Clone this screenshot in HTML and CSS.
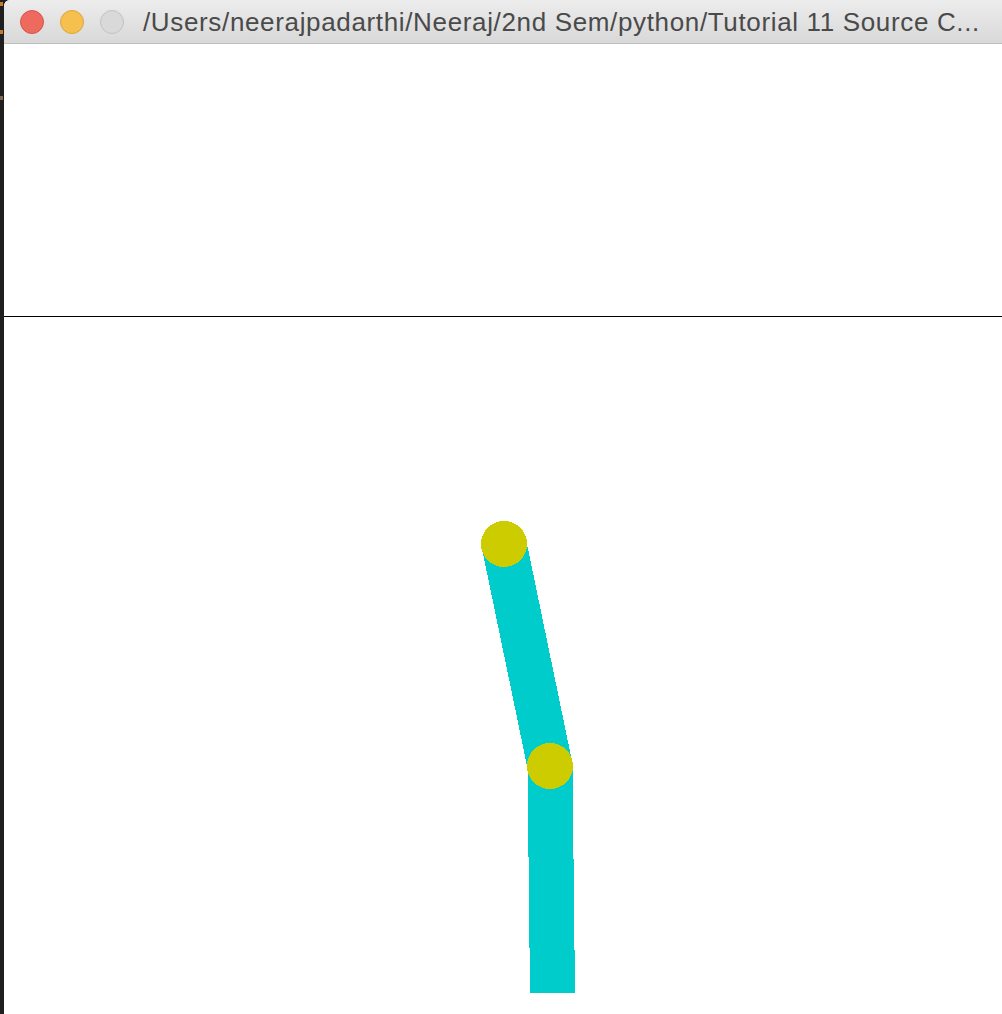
FILE: index.html
```html
<!DOCTYPE html>
<html>
<head>
<meta charset="utf-8">
<link rel="stylesheet" href="styles.css">
</head>
<body>
<div class="desktop">
  <div class="side-strip">
    <span class="dot dot-a"></span>
    <span class="dot dot-b"></span>
    <span class="dot dot-c"></span>
  </div>
  <div class="window">
    <div class="titlebar">
      <div class="lights">
        <span class="light light-close"></span>
        <span class="light light-min"></span>
        <span class="light light-max"></span>
      </div>
      <div class="title">/Users/neerajpadarthi/Neeraj/2nd Sem/python/Tutorial 11 Source C...</div>
    </div>
    <div class="canvas">
      <svg class="scene" width="998" height="970" viewBox="0 0 998 970" xmlns="http://www.w3.org/2000/svg" shape-rendering="crispEdges">
        <rect x="0" y="272" width="998" height="1" fill="#000"/>
        <line x1="500" y1="500" x2="546" y2="722" stroke="#00cccc" stroke-width="45"/>
        <line x1="546" y1="722" x2="548.5" y2="949" stroke="#00cccc" stroke-width="45"/>
        <circle cx="500" cy="500" r="23" fill="#cccc00"/>
        <circle cx="546" cy="722" r="23" fill="#cccc00"/>
      </svg>
    </div>
  </div>
</div>
</body>
</html>
```
FILE: styles.css
```css
html, body {
  margin: 0;
  padding: 0;
  background: #1f1f1f;
}
.desktop {
  display: flex;
  width: 1002px;
  height: 1014px;
  overflow: hidden;
}
.side-strip {
  width: 4px;
  flex: none;
  background: #1f1f1f;
  display: flex;
  flex-direction: column;
  align-items: flex-start;
}
.dot {
  display: block;
  width: 3px;
  height: 4px;
  background: #c47a2c;
}
.dot-a { margin-top: 2px; }
.dot-b { margin-top: 24px; }
.dot-c { margin-top: 62px; background: #7a6a50; }
.window {
  flex: 1;
  display: flex;
  flex-direction: column;
  background: #ffffff;
  border-top-left-radius: 6px;
  overflow: hidden;
}
.titlebar {
  height: 43px;
  flex: none;
  display: flex;
  align-items: center;
  background: linear-gradient(#ededed, #d8d8d8);
  border-bottom: 1px solid #bdbdbd;
}
.lights {
  display: flex;
  gap: 16px;
  margin-left: 16px;
  margin-right: 19px;
}
.light {
  width: 24px;
  height: 24px;
  border-radius: 50%;
  box-sizing: border-box;
}
.light-close { background: #ee6a5e; border: 1px solid #d8564b; }
.light-min { background: #f6c04f; border: 1px solid #dca63a; }
.light-max { background: #d9d9d9; border: 1px solid #c2c2c2; }
.title {
  font-family: "Liberation Sans", Arial, sans-serif;
  font-size: 26px;
  letter-spacing: 0.65px;
  color: #4a4a4a;
  white-space: nowrap;
  padding-top: 1px;
}
.canvas {
  flex: 1;
  position: relative;
}
.scene {
  display: block;
}
```
